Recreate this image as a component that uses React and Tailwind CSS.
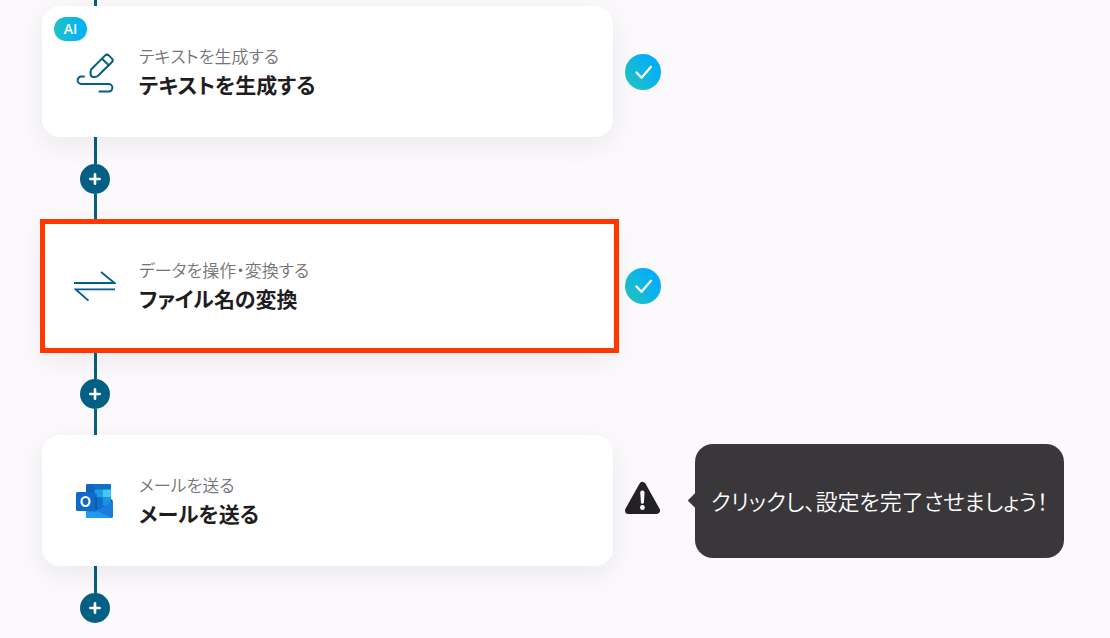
import React from 'react';

const steps = [
    { id: 1, action: 'テキストを生成する', title: 'テキストを生成する', icon: PencilIcon, ai: true, done: true },
    { id: 2, action: 'データを操作・変換する', title: 'ファイル名の変換', icon: ConvertIcon, highlighted: true, done: true },
    { id: 3, action: 'メールを送る', title: 'メールを送る', icon: OutlookIcon, hint: 'クリックし、設定を完了させましょう！' },
];

function PencilIcon() {
    return (
        <svg className="size-[42px]" viewBox="0 0 42 42" fill="none" stroke="#035f83" strokeWidth="2" strokeLinecap="round" strokeLinejoin="round" aria-hidden="true">
            <path d="M17.6 18 31.2 4.4Q33 2.8 34.8 4.4L38 7.6Q39.6 9.3 38 11L24 24.8Q22.6 26 21 26H19.6Q16.6 26 16.6 23V20.6Q16.6 19.2 17.6 18Z" />
            <path d="M28 7.8 34.8 14.2" />
            <path d="M10 25.6H7.3A3.7 3.7 0 0 0 7.3 33H34.6A3.8 3.8 0 0 1 34.6 40.6H25.4" />
        </svg>
    )
}

function ConvertIcon() {
    return (
        <svg className="size-[42px]" viewBox="0 0 42 42" fill="none" stroke="#035f83" strokeWidth="1.8" aria-hidden="true">
            <path d="M0 18H40.5L27 7" />
            <path d="M41 24.3H1.5L14.5 35.6" />
        </svg>
    )
}

function OutlookIcon() {
    return (
        <svg className="size-[42px]" viewBox="0 0 42 42" aria-hidden="true">
            <rect x="12" y="4" width="25" height="27" rx="1.5" fill="#0a62bd" />
            <path d="M12 10V5.5Q12 4 13.5 4H20.5V10Z" fill="#1066b8" />
            <path d="M20.5 4H35.5Q37 4 37 5.5V9.5H20.5Z" fill="#0f70cc" />
            <rect x="20.5" y="9.5" width="8.2" height="8" fill="#1e9de8" />
            <rect x="28.7" y="9.5" width="8.3" height="8" fill="#45c8f8" />
            <rect x="20.5" y="17.5" width="8.2" height="10" fill="#0f6fcb" />
            <rect x="28.7" y="17.5" width="8.3" height="8" fill="#1c94e4" />
            <path d="M37 19 39 21 37 23Z" fill="#0b4c97" />
            <path d="M12 23 24 29.5 39 21V36.5Q39 38 37.5 38H13.5Q12 38 12 36.5Z" fill="#1a7fdb" />
            <path d="M12 30.5H22L37.5 38H13.5Q12 38 12 36.5Z" fill="#1f9bea" />
            <rect x="14" y="13.5" width="9" height="18" rx="1" fill="#084a91" opacity=".5" />
            <rect x="2" y="12" width="19" height="19" rx="1.5" fill="#0f6bcb" />
            <ellipse cx="11.5" cy="21.5" rx="4" ry="4.5" fill="none" stroke="#fff" strokeWidth="2.2" />
        </svg>
    )
}

function DoneIcon() {
    return (
        <svg className="size-9" viewBox="0 0 36 36" role="img" aria-label="設定済み">
            <defs>
                <linearGradient id="done" x1="0" y1="1" x2="1" y2="0.3">
                    <stop offset="0.1" stopColor="#22c3c0" />
                    <stop offset="0.9" stopColor="#02adfc" />
                </linearGradient>
            </defs>
            <circle cx="18" cy="18" r="18" fill="url(#done)" />
            <path d="M11.5 18.5 16.5 23.8 26 12.8" fill="none" stroke="#fff" strokeWidth="2.3" strokeLinecap="round" strokeLinejoin="round" />
        </svg>
    )
}

function WarningIcon() {
    return (
        <svg className="h-10 w-9" viewBox="0 0 36 40" role="img" aria-label="未設定">
            <path d="M17.5 4.5 31.5 29.5H3.5Z" fill="#232126" stroke="#232126" strokeWidth="7" strokeLinejoin="round" />
            <path d="M15.3 11.5Q15.3 9.5 17.4 9.5T19.5 11.5L18.9 21.5Q18.7 22.8 17.4 22.8T15.9 21.5Z" fill="#fff" />
            <circle cx="17.4" cy="26.5" r="2.4" fill="#fff" />
        </svg>
    )
}

function Hint({ text }) {
    return (
        <div role="tooltip" className="relative flex min-h-[114px] w-full items-center justify-center rounded-[18px] bg-[#3a373a] text-[22px] font-[350] whitespace-nowrap text-white">
            <span className="absolute -left-[5px] size-[11px] rotate-45 rounded-[1px] bg-[#3a373a]" />
            {text}
        </div>
    )
}

function Step({ step }) {
    const Icon = step.icon;

    return (
        <li className="flex items-center">
            <button
                type="button"
                className={`relative flex flex-1 items-center gap-[23px] bg-white pl-8 text-left shadow-[0_8px_28px_rgba(30,25,40,0.07)] ${step.highlighted ? 'min-h-[132px]' : 'min-h-[131px] rounded-[18px]'}`}
            >
                {step.highlighted && <span className="absolute -top-px -right-1.5 -bottom-px -left-0.5 border-5 border-[#ff3800]" />}
                {step.ai && (
                    <span className="absolute top-[11px] left-3 flex h-6 w-[33px] items-center justify-center rounded-full bg-linear-to-r from-[#1fc2c6] to-[#02b0fa] font-['Open_Sans','Noto_Sans_CJK_JP',sans-serif] text-sm font-semibold text-white">
                        AI
                    </span>
                )}
                <Icon />
                <span className="flex flex-col pb-1 leading-7">
                    <span className="text-[17px] font-[350] text-[#757378]">{step.action}</span>
                    <span className="text-[21px] font-bold text-[#1f1d22]">{step.title}</span>
                </span>
            </button>
            <div className="ml-3 flex w-9 justify-center">
                {step.done ? <DoneIcon /> : <WarningIcon />}
            </div>
            <div className="ml-[34px] w-[369px]">
                {step.hint && <Hint text={step.hint} />}
            </div>
        </li>
    )
}

function AddStep({ last }) {
    return (
        <li className="ml-[38px] flex w-[30px] flex-col items-center">
            <span className="h-[27px] w-[3px] bg-[#035f83]" />
            <button type="button" aria-label="ステップを追加" className="flex size-[30px] items-center justify-center rounded-full bg-[#035f83]">
                <svg className="size-3" viewBox="0 0 12 12" stroke="#fff" strokeWidth="2.6" strokeLinecap="round" aria-hidden="true">
                    <path d="M6 1.3V10.7M1.3 6H10.7" />
                </svg>
            </button>
            {!last && <span className="h-[26px] w-[3px] bg-[#035f83]" />}
        </li>
    )
}

function App() {
    return (
        <main className="min-h-screen bg-[#fbf9fc] pr-[46px] pl-[42px] font-['Noto_Sans_CJK_JP',sans-serif] [font-feature-settings:'palt'] [font-kerning:none]">
            <ol>
                <li className="ml-[38px] flex w-[30px] justify-center">
                    <span className="h-1.5 w-[3px] bg-[#035f83]" />
                </li>
                {steps.map((step, index) => (
                    <React.Fragment key={step.id}>
                        <Step step={step} />
                        <AddStep last={index === steps.length - 1} />
                    </React.Fragment>
                ))}
            </ol>
        </main>
    )
}

export default App;
